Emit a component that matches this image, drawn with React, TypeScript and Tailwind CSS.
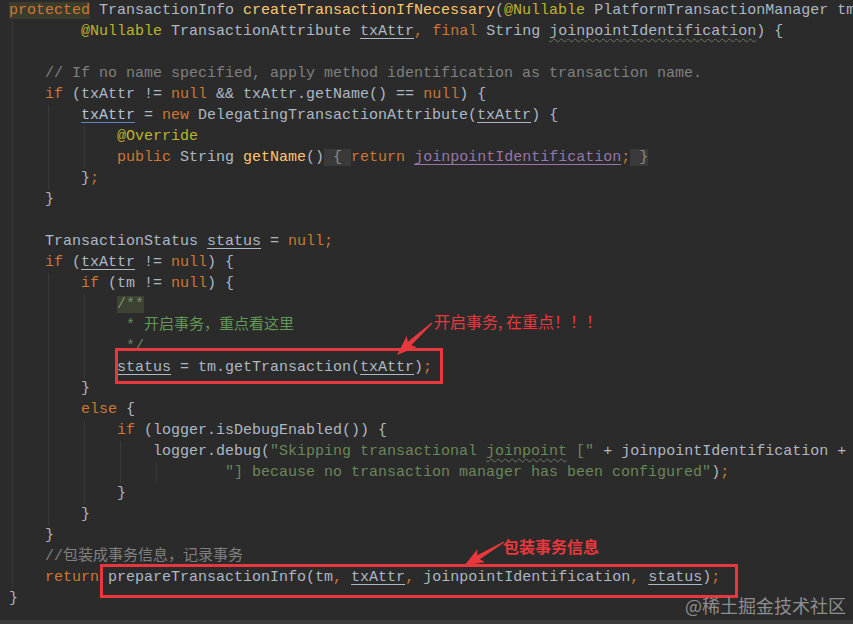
import React from 'react'

type Tok = [string, string?]

const K = 'text-[#cc7832]'
const A = 'text-[#bbb529]'
const C = 'text-[#808080]'
const S = 'text-[#6a8759]'
const F = 'text-[#ffc66d]'
const D = 'text-[#629755]'
const P = 'text-[#9876aa]'
const U = 'underline decoration-1 underline-offset-[3px]'
const W = 'underline decoration-wavy decoration-1 decoration-[#687a5e] underline-offset-[3px]'
const FOLD = 'bg-[#3a3a3a] text-[#8c8c8c]'

const lines: Tok[][] = [
  [['protected', K + ' bg-[#3d3b2c]'], [' TransactionInfo '], ['createTransactionIfNecessary', F], ['('], ['@Nullable', A], [' PlatformTransactionManager tm'], [',', K], [' ']],
  [['        '], ['@Nullable', A], [' TransactionAttribute '], ['txAttr', U], [',', K], [' '], ['final', K], [' String '], ['joinpointIdentification', W], [') {']],
  [],
  [['    // If no name specified, apply method identification as transaction name.', C]],
  [['    '], ['if', K], [' (txAttr != '], ['null', K], [' && txAttr.getName() == '], ['null', K], [') {']],
  [['        '], ['txAttr', U + ' text-[#b4c3d6] decoration-[#5a86c5]'], [' = '], ['new', K], [' DelegatingTransactionAttribute('], ['txAttr', U], [') {']],
  [['            '], ['@Override', A]],
  [['            '], ['public', K], [' String '], ['getName', F], ['()'], [' { ', FOLD], ['return', K], [' '], ['joinpointIdentification', P + ' ' + U], [';', K], [' }', FOLD]],
  [['        }'], [';', K]],
  [['    }']],
  [],
  [['    TransactionStatus '], ['status', U], [' = '], ['null', K], [';', K]],
  [['    '], ['if', K], [' ('], ['txAttr', U], [' != '], ['null', K], [') {']],
  [['        '], ['if', K], [' (tm != '], ['null', K], [') {']],
  [['            '], ['/**', 'text-[#7f8c6f] bg-[#3c4332]']],
  [['             * 开启事务，重点看这里', D]],
  [['             */', 'text-[#6f7f62]']],
  [['            '], ['status', U], [' = tm.getTransaction('], ['txAttr', U], [')'], [';', K]],
  [['        }']],
  [['        '], ['else', K], [' {']],
  [['            '], ['if', K], [' (logger.isDebugEnabled()) {']],
  [['                logger.debug('], ['"Skipping transactional ', S], ['joinpoint', S + ' ' + W], [' ["', S], [' + joinpointIdentification +']],
  [['                        '], ['"] because no transaction manager has been configured"', S], [')'], [';', K]],
  [['            }']],
  [['        }']],
  [['    }']],
  [['    //包装成事务信息，记录事务', C]],
  [['    '], ['return', K], [' prepareTransactionInfo(tm'], [',', K], [' '], ['txAttr', U], [',', K], [' joinpointIdentification'], [',', K], [' '], ['status', U], [')'], [';', K]],
  [['}']],
]

// [column, first line, last line]
const guides: [number, number, number][] = [
  [0, 1, 27],
  [4, 5, 8],
  [4, 13, 24],
  [8, 6, 7],
  [8, 14, 17],
  [8, 20, 23],
  [12, 21, 22],
  [16, 22, 22],
]

function arrowPoints(x1: number, y1: number, x2: number, y2: number, head = 17, hw = 7.5, sw = 2.4) {
  const dx = x2 - x1
  const dy = y2 - y1
  const len = Math.hypot(dx, dy)
  const ux = dx / len
  const uy = dy / len
  const nx = uy
  const ny = -ux
  const bx = x2 - ux * head
  const by = y2 - uy * head
  const pts = [
    [x1 + nx * 0.6, y1 + ny * 0.6],
    [bx + nx * sw, by + ny * sw],
    [bx + nx * hw - ux * 3, by + ny * hw - uy * 3],
    [x2, y2],
    [bx - nx * hw - ux * 3, by - ny * hw - uy * 3],
    [bx - nx * sw, by - ny * sw],
    [x1 - nx * 0.6, y1 - ny * 0.6],
  ]
  return pts.map((p) => p[0].toFixed(1) + ',' + p[1].toFixed(1)).join(' ')
}

const CodeLine = ({ toks, index }: { toks: Tok[]; index: number }) => {
  const cols = guides.filter((g) => index >= g[1] && index <= g[2]).map((g) => g[0])
  return (
    <div className="relative h-[21px] pl-[9px] whitespace-pre leading-[21px]">
      {cols.map((c) => (
        <span key={c} className="absolute top-0 h-[21px] w-px bg-[#393939]" style={{ left: 12 + c * 9 }} />
      ))}
      {toks.map((t, i) => (
        <span key={i} className={'relative ' + (t[1] ?? '')}>
          {t[0]}
        </span>
      ))}
    </div>
  )
}

export default function App() {
  return (
    <div className="relative w-[853px] h-[624px] overflow-hidden bg-[#2b2b2b] flex flex-col">
      {/* Editor */}
      <div className="flex-1 text-[15px] text-[#adb8c4] font-['Liberation_Mono','Noto_Sans_CJK_SC',monospace]">
        {lines.map((l, i) => (
          <CodeLine key={i} toks={l} index={i} />
        ))}
      </div>
      <div className="h-[4px] bg-[#3a3a3a]" />

      {/* Annotations drawn over the code */}
      <div className="absolute left-[115px] top-[348px] w-[328px] h-[36px] border-[3px] border-[#e8383d]" />
      <div className="absolute left-[100px] top-[564px] w-[638px] h-[34px] border-[3px] border-[#e8383d]" />

      <svg className="absolute inset-0 pointer-events-none" width={853} height={624}>
        <polygon points={arrowPoints(432, 323, 397, 355)} fill="#e8383d" />
        <polygon points={arrowPoints(504, 542, 464, 566)} fill="#e8383d" />
      </svg>

      <div className="absolute left-[434px] top-[309px] text-[16px] leading-[24px] text-[#e8383d] font-['Noto_Sans_CJK_SC',sans-serif]">
        开启事务, 在重点！！！
      </div>
      <div className="absolute left-[503px] top-[534px] text-[16px] leading-[24px] font-bold text-[#e8383d] font-['Noto_Sans_CJK_SC',sans-serif]">
        包装事务信息
      </div>

      <div className="absolute left-[685px] top-[592px] text-[18px] leading-[26px] text-[#8e8e8e] font-['Noto_Sans_CJK_SC',sans-serif]">
        @稀土掘金技术社区
      </div>
    </div>
  )
}
